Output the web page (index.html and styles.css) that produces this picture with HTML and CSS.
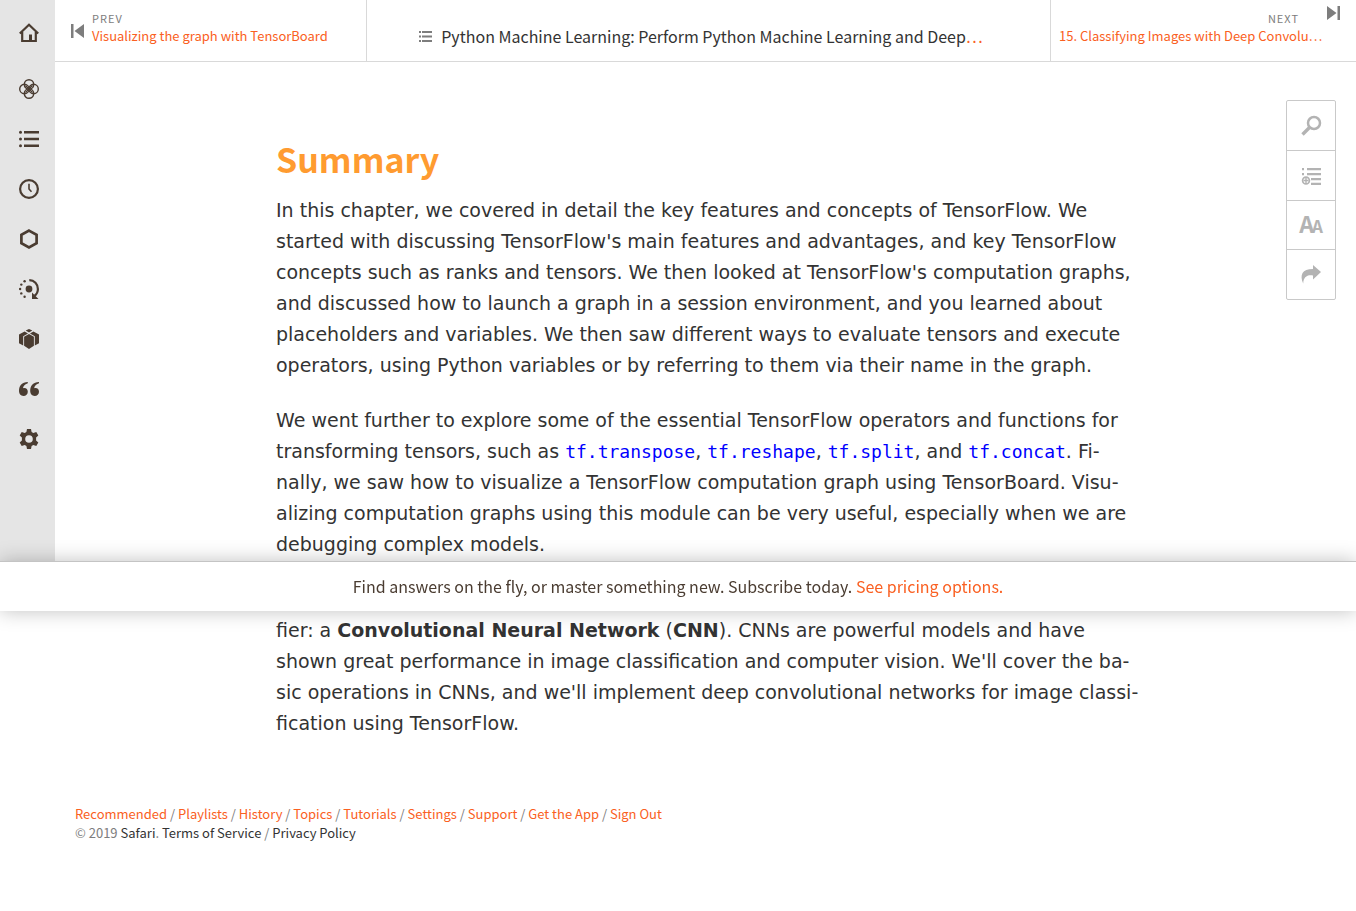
FILE: index.html
```html
<!DOCTYPE html>
<html lang="en">
<head>
<meta charset="utf-8">
<title>Summary - Python Machine Learning</title>
<link rel="stylesheet" href="styles.css">
</head>
<body>
<div class="shell">
  <nav class="sidebar" aria-label="Main">
    <a class="side-link home" href="#" aria-label="Home"><svg viewBox="0 0 20 20"><path d="M.8 10.500 10 1.800l9.200 8.700M3.200 9v9h13.600V9" fill="none" stroke="currentColor" stroke-width="2.200"/><path d="M10 11.500h3V18h-3z"/></svg></a>
    <a class="side-link" href="#" aria-label="Recommended"><svg viewBox="0 0 20 20" fill="none" stroke="currentColor" stroke-width="1.400"><circle cx="10" cy="5.400" r="4.700"/><circle cx="10" cy="14.600" r="4.700"/><circle cx="5.400" cy="10" r="4.700"/><circle cx="14.600" cy="10" r="4.700"/><path d="m6.500 6.500 7 7M13.500 6.500l-7 7" stroke-width="1.200"/></svg></a>
    <a class="side-link" href="#" aria-label="Playlists"><svg viewBox="0 0 20 20"><path d="M5 2h15v2.600H5zM5 8.700h15v2.600H5zM5 15.400h15V18H5z"/><circle cx="1.500" cy="3.300" r="1.500"/><circle cx="1.500" cy="10" r="1.500"/><circle cx="1.500" cy="16.700" r="1.500"/></svg></a>
    <a class="side-link" href="#" aria-label="History"><svg viewBox="0 0 20 20" fill="none" stroke="currentColor"><circle cx="10" cy="10" r="8.900" stroke-width="2.200"/><path d="M10 4.800V10l2.500 2.800" stroke-width="1.600"/></svg></a>
    <a class="side-link" href="#" aria-label="Topics"><svg viewBox="0 0 20 20"><path d="m10 1.600 7.600 4.200v8.400L10 18.400l-7.600-4.200V5.800z" fill="none" stroke="currentColor" stroke-width="2.700"/></svg></a>
    <a class="side-link" href="#" aria-label="Tutorials"><svg viewBox="0 0 20 20"><circle cx="10" cy="10" r="3.400"/><path d="M10.300 1.200c5 0 8.600 4 8.600 8.800 0 3-1.300 5.300-3.400 6.800" fill="none" stroke="currentColor" stroke-width="2.200"/><path d="M13 13.500V20h6.500z"/><circle cx="5.600" cy="2.300" r="1.200"/><circle cx="2.300" cy="5.600" r="1.200"/><circle cx="1.100" cy="10" r="1.200"/><circle cx="2.300" cy="14.400" r="1.200"/><circle cx="5.600" cy="17.700" r="1.200"/></svg></a>
    <a class="side-link" href="#" aria-label="Case studies"><svg viewBox="0 0 20 20"><path d="m10 0 3.300 1.600L10 3.500 6.700 1.600zM5.600 2.400 9 4.400 4.200 7.200v9.200L0 14.200V5.600zM14.400 2.400 11 4.400l4.800 2.800v9.200l4.200-2.200V5.600zM10 5l4.900 2.800v8.900L10 20l-4.900-3.300V7.800z"/></svg></a>
    <a class="side-link" href="#" aria-label="Highlights"><svg viewBox="0 0 20 20"><path d="M8.800 3v1.200C5.400 5.200 4.200 7.200 4 9.200c3-.7 4.800 1 4.800 3.600S7 17 4.500 17C1.600 17 0 14.800 0 11.800 0 6.600 3 3.400 8.800 3z"/><path d="M20 3v1.200c-3.400 1-4.600 3-4.800 5 3-.7 4.800 1 4.800 3.600S18.200 17 15.700 17c-2.900 0-4.500-2.200-4.500-5.200 0-5.200 3-8.400 8.800-8.800z"/></svg></a>
    <a class="side-link" href="#" aria-label="Settings"><svg viewBox="0 0 20 20"><path fill-rule="evenodd" d="M8 0h4l.6 3 1.700 1 3-1 2 3.500-2.200 2v2.900l2.200 2-2 3.600-3-1-1.700 1L12 20H8l-.6-3-1.700-1-3 1-2-3.600 2.200-2V8.500l-2.200-2L2.700 3l3 1 1.700-1zM10 6.200a3.800 3.800 0 1 0 0 7.600 3.800 3.800 0 0 0 0-7.600z"/></svg></a>
  </nav>
  <div class="page">
    <header class="topbar">
      <a class="nav-cell prev" href="#">
        <svg class="skip" viewBox="0 0 13 14"><path d="M0 0h2.500v14H0zM13 0v14L3.500 7z"/></svg>
        <span class="nav-text"><span class="nav-label">PREV</span><span class="nav-title">Visualizing the graph with TensorBoard</span></span>
      </a>
      <a class="book" href="#">
        <svg class="toc" viewBox="0 0 13 11"><path d="M0 0h2v2H0zM3 0h10v2H3zM0 4.500h2v2H0zM3 4.500h10v2H3zM0 9h2v2H0zM3 9h10v2H3z"/></svg>
        <span class="book-title">Python Machine Learning: Perform Python Machine Learning and Deep<span class="dots">…</span></span>
      </a>
      <a class="nav-cell next" href="#">
        <span class="nav-text"><span class="nav-label">NEXT</span><span class="nav-title">15. Classifying Images with Deep Convolu…</span></span>
        <svg class="skip" viewBox="0 0 13 14"><path d="M10.500 0H13v14h-2.500zM0 0v14l9.500-7z"/></svg>
      </a>
    </header>
    <main class="content">
      <h1>Summary</h1>
      <p>In this chapter, we covered in detail the key features and concepts of TensorFlow. We started with discussing TensorFlow's main features and advantages, and key TensorFlow concepts such as ranks and tensors. We then looked at TensorFlow's computation graphs, and discussed how to launch a graph in a session environment, and you learned about placeholders and variables. We then saw different ways to evaluate tensors and execute operators, using Python variables or by referring to them via their name in the graph.</p>
      <p>We went further to explore some of the essential TensorFlow operators and functions for transforming tensors, such as <code>tf.transpose</code>, <code>tf.reshape</code>, <code>tf.split</code>, and <code>tf.concat</code>. Fi&shy;nally, we saw how to visualize a TensorFlow computation graph using TensorBoard. Visu&shy;alizing computation graphs using this module can be very useful, especially when we are debugging complex models.</p>
      <p>In the next chapter, we will discuss one of the most widely used types of classi-<br>fier: a <strong>Convolutional Neural Network</strong> (<strong>CNN</strong>). CNNs are powerful models and have shown great performance in image classification and computer vision. We'll cover the ba&shy;sic operations in CNNs, and we'll implement deep convolutional networks for image classi&shy;fication using TensorFlow.</p>
    </main>
    <footer class="footer">
      <div><a href="#">Recommended</a> / <a href="#">Playlists</a> / <a href="#">History</a> / <a href="#">Topics</a> / <a href="#">Tutorials</a> / <a href="#">Settings</a> / <a href="#">Support</a> / <a href="#">Get the App</a> / <a href="#">Sign Out</a></div>
      <div class="legal">© 2019 <a href="#">Safari</a>. <a href="#">Terms of Service</a> / <a href="#">Privacy Policy</a></div>
    </footer>
  </div>
</div>
<div class="tools">
  <button aria-label="Search"><svg viewBox="0 0 24 24"><circle cx="15" cy="9" r="6" fill="none" stroke="currentColor" stroke-width="2.500"/><path d="m10.500 13.500-7 7" stroke="currentColor" stroke-width="3.400"/></svg></button>
  <button aria-label="Add to playlist"><svg viewBox="0 0 24 24"><path d="M3 4h2v2.300H3zM8 4h14v2.300H8zM3 9h2v2.300H3zM8 9h14v2.300H8zM12 14h10v2.300H12zM12 18.700h10V21H12z"/><path d="M7 14v5M4.500 16.500h5" stroke="currentColor" stroke-width="1.400"/><circle cx="7" cy="16.500" r="3.400" fill="none" stroke="currentColor" stroke-width="1.700"/></svg></button>
  <button class="text-size" aria-label="Text size"><span class="big-a">A</span><span class="small-a">A</span></button>
  <button aria-label="Share"><svg viewBox="0 0 24 24"><path d="M14 2l8 7-8 7.500v-4C8 11.500 4.500 14 4.200 20.500.500 12 3 6 14 6z"/></svg></button>
</div>
<aside class="banner"><span>Find answers on the fly, or master something new. Subscribe today. <a href="#">See pricing options.</a></span></aside>
</body>
</html>
```
FILE: styles.css
```css
* { box-sizing: border-box; }
body {
  margin: 0;
  background: #fff;
  color: #333;
  font-family: "Noto Sans CJK SC", "Noto Sans", sans-serif;
}
a { color: #fa6022; text-decoration: none; }
svg { display: block; fill: currentColor; }
svg[fill="none"] { fill: none; }

.shell { display: flex; min-height: 100vh; }
.sidebar {
  width: 55px;
  flex: none;
  height: 561px;
  background: #e5e5e5;
  display: flex;
  flex-direction: column;
  padding: 8px 0 0 3px;
}
.side-link {
  height: 50px;
  display: flex;
  align-items: center;
  justify-content: center;
  color: #4a3c31;
}
.side-link svg { width: 20px; height: 20px; }
.home { margin-bottom: 6px; }
.page { flex: 1; min-width: 0; }

.topbar {
  display: flex;
  height: 62px;
  border-bottom: 1px solid #d9d9d9;
}
.nav-cell { display: flex; color: #7d7d7d; }
.prev { width: 24%; padding: 10px 16px; gap: 8px; border-right: 1px solid #d9d9d9; }
.prev .skip { margin-top: 14px; }
.next { width: 306px; padding: 6px 16px 0 8px; gap: 8px; border-left: 1px solid #d9d9d9; }
.next .nav-text { padding-top: 4px; }
.next .nav-label { text-align: right; padding-right: 20px; }
.skip { width: 13px; height: 14px; flex: none; }
.nav-text { display: flex; flex-direction: column; min-width: 0; }
.nav-label { font-size: 11px; line-height: 17px; letter-spacing: 1px; }
.nav-title { font-size: 13px; line-height: 18px; color: #fa6022; white-space: nowrap; }
.book {
  flex: 1;
  min-width: 0;
  display: flex;
  align-items: center;
  padding: 12px 52px 0;
  gap: 9px;
  color: #333;
}
.toc { width: 13px; height: 11px; color: #7d7d7d; flex: none; }
.book-title { font-size: 16px; line-height: 24px; padding-bottom: 2px; white-space: nowrap; }
.dots { color: #fa6022; }

.content { max-width: 869px; margin: 0 auto; padding: 76px 0 0 5px; }
h1 { margin: 0; font-size: 34px; line-height: 42px; color: #ff9b30; font-weight: 700; }
.content p {
  margin: 0 0 24px;
  font-family: "DejaVu Sans", sans-serif;
  font-size: 19px;
  line-height: 31px;
}
.content h1 + p { padding-top: 15px; }
code { font-family: "DejaVu Sans Mono", monospace; font-size: 18px; color: #00f; }

.footer { padding: 41px 20px 60px; font-size: 13px; line-height: 19px; color: #7d7d7d; }
.legal a { color: #333; }

.tools {
  position: fixed;
  top: 100px;
  right: 20px;
  width: 50px;
  border: 1px solid #c9c9c9;
  border-radius: 2px;
  background: #fff;
}
.tools button {
  width: 100%;
  height: 50px;
  padding: 0;
  border: 0;
  border-bottom: 1px solid #c9c9c9;
  background: none;
  color: #b3b3b3;
  display: flex;
  align-items: center;
  justify-content: center;
  font-family: inherit;
  font-weight: 700;
}
.tools .text-size { height: 49px; align-items: baseline; padding-top: 10px; }
.tools button:last-child { border-bottom: 0; height: 49px; }
.tools svg { width: 24px; height: 24px; }
.big-a { font-size: 23px; line-height: 24px; margin-right: -2px; }
.small-a { font-size: 17px; line-height: 24px; }

.banner {
  position: fixed;
  left: 0;
  right: 0;
  top: 561px;
  height: 50px;
  padding-bottom: 2px;
  background: #fff;
  border-top: 1px solid #c4c4c4;
  box-shadow: 0 0 20px rgba(0, 0, 0, .25);
  display: flex;
  align-items: center;
  justify-content: center;
  color: #4a3c31;
  font-size: 16px;
  line-height: 24px;
}
```
